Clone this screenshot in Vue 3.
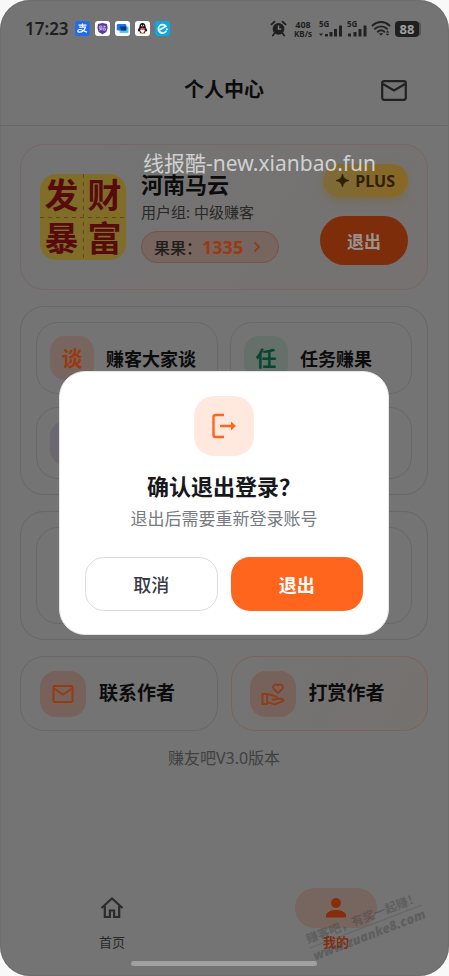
<script setup>
const services = [
  { label: '赚客大家谈', glyph: '谈', tone: 'orange' },
  { label: '任务赚果', glyph: '任', tone: 'green' },
  { label: '', glyph: '', tone: 'violet' },
  { label: '', glyph: '', tone: 'plain' },
]
const signals = [
  { id: 1, dot: true },
  { id: 2, dot: false },
]
</script>

<template>
  <div class="screen">
    <div class="status">
      <span class="time">17:23</span>
      <div class="apps">
        <svg viewBox="0 0 15 15"><rect width="15" height="15" rx="3" fill="#1f6cf0" /><path d="M3.5 4.2h8M7.5 2.4v3.7M4.2 6.2h6.2C9.500 9 7 11.200 4.500 11.200c-2.600 0-2.200-2.700.3-2.700 2.200 0 4.200 1.800 7.300 2.700" fill="none" stroke="#fff" stroke-width="1.200" /></svg>
        <svg viewBox="0 0 15 15"><rect width="15" height="15" rx="3" fill="#fff" /><path d="M3 3l4.500-1L12 3l.6 4-1.200 4-3.900 2.200L3.600 11 2.400 7z" fill="#5a3a9c" /><path d="M4.700 5h2.200v3.200H4.700zM5.800 6v2.200l-1.300 1.500M6 8.500l1 1M9 4.400v2.300M9 5.500h1.800M8.200 7.200h2.200v2H8.200z" fill="none" stroke="#d9c9f5" stroke-width=".8" /></svg>
        <svg viewBox="0 0 15 15"><rect width="15" height="15" rx="3" fill="#fff" /><path d="M4.500 5.500h9v5.500a1 1 0 0 1-1 1h-7a1 1 0 0 1-1-1z" fill="#55c5f5" /><rect x="1.800" y="3" width="9.500" height="6.500" rx="1.200" fill="#1d74e8" /><path d="M5 5.500h6.300V9.500H6z" fill="#0a3678" /></svg>
        <svg viewBox="0 0 15 15"><rect width="15" height="15" rx="3" fill="#fff" /><path d="M7.500 2c-2 0-3 1.500-3 3.300 0 1.200-1.600 2.800-1.600 4.700 0 .8.800.3 1.200-.3.300 1.500 1.500 2.800 3.400 2.800s3.100-1.300 3.400-2.800c.4.600 1.200 1.100 1.200.3 0-1.900-1.600-3.500-1.600-4.700C10.500 3.500 9.500 2 7.500 2z" fill="#151515" /><ellipse cx="7.500" cy="9.600" rx="2.200" ry="2.300" fill="#fff" /><path d="M4.600 6.800c1.800 1 4 1 5.800 0v1.300c-1.800.8-4 .8-5.800 0z" fill="#df2323" /><circle cx="6.600" cy="4.300" r=".6" fill="#fff" /><circle cx="8.400" cy="4.300" r=".6" fill="#fff" /><path d="M6 5.600h3l-1.500.8zM4.500 12h2.400v.8H4.500zM8.100 12h2.400v.8H8.100z" fill="#f0a020" /></svg>
        <svg viewBox="0 0 15 15"><rect width="15" height="15" rx="3" fill="#08a9e8" /><path d="M5.300 8.600l5.600-3.300A4.200 4.200 0 1 0 11 10.200" fill="none" stroke="#fff" stroke-width="1.700" stroke-linecap="round" /><circle cx="12" cy="8.200" r=".9" fill="#fff" /></svg>
      </div>
      <div class="indicators">
        <svg class="alarm" viewBox="0 0 17 17"><circle cx="8.500" cy="8.800" r="5.900" fill="#1f1f1f" /><path d="M1.500 4.300l3-2.700M15.500 4.300l-3-2.700M4.500 13.300L2.800 15.500M12.500 13.300l1.700 2.200" stroke="#1f1f1f" stroke-width="1.800" stroke-linecap="round" /><path d="M8.500 5.500v3.600h2.800" stroke="#858585" stroke-width="1.400" fill="none" /></svg>
        <span class="speed"><b>408</b><b>KB/s</b></span>
        <div v-for="s in signals" :key="s.id" class="signal">
          <span>5G</span>
          <svg v-if="s.dot" viewBox="0 0 24 12"><path d="M0 8.500h4L2 11z" fill="#222" /><path d="M7.500 11.500V9M12 11.500V7M16.500 11.500V4M21.500 11.500V.5" stroke="#222" stroke-width="3" /></svg>
          <svg v-else class="narrow" viewBox="0 0 20 12"><path d="M2.500 11.500V8.500M8 11.500V7M13 11.500V4M18 11.500V.5" stroke="#222" stroke-width="3" /></svg>
        </div>
        <svg class="wifi" viewBox="0 0 20 17"><path d="M1.500 5.500c5-4.600 12-4.600 17 0M4 8.800c3.500-3.300 8.500-3.300 12 0M6.700 11.700c2-1.800 4.600-1.800 6.600 0" fill="none" stroke="#222" stroke-width="1.900" stroke-linecap="round" /><path d="M7.700 13.300h4.600L10 15.800zM14.700 12.500l1.800-2 1.800 2zM14.700 13.800h3.600l-1.800 2z" fill="#222" /></svg>
        <span class="battery">88</span>
      </div>
    </div>

    <header class="topbar">
      <h1>个人中心</h1>
      <button class="mail" aria-label="消息">
        <svg viewBox="0 0 26 21"><rect x="1.200" y="1.200" width="23.600" height="18.600" rx="2" fill="none" stroke="#212121" stroke-width="2.200" /><path d="M2 4l11 6.500L24 4" fill="none" stroke="#212121" stroke-width="2.200" /></svg>
      </button>
    </header>

    <main>
      <section class="card profile">
        <div class="avatar"><span>发</span><span>财</span><span>暴</span><span>富</span></div>
        <div class="info">
          <h2>河南马云</h2>
          <p>用户组: 中级赚客</p>
          <a class="points" href="#">
            <span>果果：</span><strong>1335</strong>
            <svg viewBox="0 0 8 12"><path d="M1.500 1.500L6 6l-4.500 4.500" fill="none" stroke="#84401f" stroke-width="1.800" /></svg>
          </a>
        </div>
        <div class="side">
          <span class="plus">
            <svg viewBox="0 0 12 12"><path d="M6 0Q6.800 5.200 12 6 6.800 6.800 6 12 5.200 6.800 0 6 5.200 5.200 6 0z" stroke="#2f2003" stroke-width=".8" fill="#2f2003" /></svg>PLUS
          </span>
          <button class="quit">退出</button>
        </div>
      </section>

      <section class="card grid">
        <button v-for="(s, i) in services" :key="i" class="tile">
          <span class="badge" :class="s.tone">{{ s.glyph }}</span>
          <span>{{ s.label }}</span>
        </button>
      </section>

      <section class="card">
        <div class="tile tall"></div>
      </section>

      <section class="authors">
        <button class="author">
          <span class="mark">
            <svg viewBox="0 0 24 24"><rect x="2.500" y="4" width="19" height="16" rx="1" fill="none" stroke="#983a14" stroke-width="2" /><path d="M3 6.500l9 6 9-6" fill="none" stroke="#983a14" stroke-width="2" /></svg>
          </span>
          <span class="caption">联系作者</span>
        </button>
        <button class="author warm">
          <span class="mark">
            <svg viewBox="0 0 24 24"><g fill="none" stroke="#8c3d19" stroke-width="1.900" stroke-linejoin="round"><path d="M17 11l-4-3.900c-2.400-2.700 1.300-6.600 4-3.700 2.700-2.900 6.400 1 4 3.700z" /><path d="M1.500 12h4.700v10H1.500z" /><path d="M6.200 12.500h3.300l5.500 2.200c1.700.9 1.200 2.800-.6 2.800h-3.700M14.800 16.800h5.200c1.400 0 2.300.9 2.300 2.100L14 22.300l-7.800-2" /></g></svg>
          </span>
          <span class="caption">打赏作者</span>
        </button>
      </section>
      <p class="version">赚友吧V3.0版本</p>
    </main>

    <nav>
      <a href="#">
        <span class="pill"><svg viewBox="0 0 24 24"><path d="M1.500 12L12 2.500 22.500 12M4.800 10v11h5.100v-6.500h4.200V21h5.100V10" fill="none" stroke="#2b2b2b" stroke-width="2.200" /></svg></span>
        <span>首页</span>
      </a>
      <a href="#" class="active">
        <span class="pill"><svg viewBox="0 0 24 24"><circle cx="12" cy="7" r="5" fill="#852e0b" /><path d="M2 21.500v-2c0-3.500 5.500-5.500 10-5.500s10 2 10 5.500v2z" fill="#852e0b" /></svg></span>
        <span>我的</span>
      </a>
    </nav>
    <div class="home-bar"></div>

    <span class="site">线报酷-new.xianbao.fun</span>
    <div class="stamp"><span>赚客吧，有奖一起赚！</span><b>www.zuanke8.com</b></div>

    <div class="overlay">
      <div class="dialog" role="dialog" aria-labelledby="dialog-title">
        <div class="dialog-icon">
          <svg viewBox="0 0 28 28"><path d="M14 3H5.500Q3.500 3 3.500 5v18q0 2 2 2H14" fill="none" stroke="#ff651d" stroke-width="2.400" /><path d="M11 14h12" stroke="#ff651d" stroke-width="2.400" stroke-linecap="round" /><path d="M21 9.500L26 14l-5 4.500z" fill="#ff651d" /></svg>
        </div>
        <h2 id="dialog-title">确认退出登录？</h2>
        <p>退出后需要重新登录账号</p>
        <div class="actions">
          <button class="cancel">取消</button>
          <button class="confirm">退出</button>
        </div>
      </div>
    </div>
  </div>
</template>

<style>
body {
  margin: 0;
  background: #f8f8f8;
}
</style>

<style scoped>
* {
  box-sizing: border-box;
}
.screen {
  position: relative;
  display: flex;
  flex-direction: column;
  min-height: 100vh;
  padding-right: 1px;
  overflow: hidden;
  border-radius: 30px;
  background: #747474;
  box-shadow: inset 0 0 2px #5f5f50;
  color: #0c0c0d;
  font-family: "Noto Sans", "Noto Sans CJK SC", sans-serif;
}
h1, h2, p {
  margin: 0;
}
button {
  padding: 0;
  border: 0;
  background: none;
  color: inherit;
  font: inherit;
  cursor: pointer;
}
a {
  color: inherit;
  text-decoration: none;
}
svg {
  display: block;
  flex: none;
}
.status {
  display: flex;
  align-items: center;
  height: 57px;
  padding: 0 29px 0 25px;
  color: #1f1f1f;
}
.time {
  font-size: 17px;
  font-weight: 600;
  line-height: 20px;
}
.apps {
  display: flex;
  gap: 5px;
  margin-left: 6px;
}
.apps svg {
  width: 15px;
  height: 15px;
}
.indicators {
  display: flex;
  align-items: center;
  gap: 4px;
  margin-left: auto;
}
.alarm {
  width: 17px;
  height: 17px;
}
.speed {
  display: flex;
  flex-direction: column;
  align-items: center;
  margin: 0 3px;
  font-size: 9px;
  line-height: 9px;
}
.speed b:last-child {
  font-size: 8px;
}
.signal {
  position: relative;
  padding-top: 4px;
}
.signal span {
  position: absolute;
  top: -1px;
  left: 0;
  font-size: 8px;
  font-weight: 700;
  line-height: 8px;
}
.signal svg {
  width: 24px;
  height: 12px;
}
.signal svg.narrow {
  width: 20px;
}
.wifi {
  width: 20px;
  height: 17px;
}
.battery {
  width: 24px;
  border-radius: 4px;
  background: #1f1f1f;
  box-shadow: 3px 0 0 -1px #555;
  color: #a0a0a0;
  font-size: 13px;
  font-weight: 700;
  line-height: 16px;
  text-align: center;
}
.topbar {
  display: grid;
  grid-template-columns: 1fr auto 1fr;
  align-items: center;
  height: 69px;
  padding: 0 41px 2px;
  border-bottom: 1px solid #696969;
}
.topbar h1 {
  grid-column: 2;
  font-size: 20px;
  font-weight: 700;
  line-height: 28px;
}
.mail {
  justify-self: end;
}
.mail svg {
  width: 26px;
  height: 21px;
}
main {
  display: flex;
  flex-direction: column;
  gap: 16px;
  padding: 18px 20px 0;
}
.card {
  padding: 15px;
  border: 1px solid #676767;
  border-radius: 24px;
}
.profile {
  display: flex;
  align-items: center;
  gap: 15px;
  padding: 19px;
  border-color: #756763;
  background: linear-gradient(120deg, #747474, #757271);
}
.avatar {
  display: grid;
  grid-template-columns: 1fr 1fr;
  flex: none;
  width: 86px;
  height: 86px;
  border-radius: 16px;
  background:
    repeating-linear-gradient(90deg, #6a4319 0 4px, transparent 4px 8px) center / 100% 1px no-repeat,
    repeating-linear-gradient(#6a4319 0 4px, transparent 4px 8px) center / 1px 100% no-repeat,
    #806e28;
  color: #570b0d;
  font-size: 34px;
  font-weight: 700;
  line-height: 43px;
  text-align: center;
}
.info {
  display: flex;
  flex: 1;
  flex-direction: column;
  align-items: flex-start;
}
.info h2 {
  font-size: 22px;
  font-weight: 700;
  line-height: 26px;
}
.info p {
  margin: 5px 0 9px;
  color: #282828;
  font-size: 15px;
  line-height: 20px;
  white-space: nowrap;
}
.points {
  display: flex;
  align-items: center;
  height: 32px;
  padding: 0 17px 0 12px;
  border: 1px solid #765447;
  border-radius: 16px;
  background: #77655f;
  color: #211d1b;
  font-size: 16px;
  font-weight: 500;
}
.points strong {
  color: #983a14;
  font-size: 18px;
}
.points svg {
  width: 8px;
  height: 12px;
  margin-left: 10px;
}
.side {
  display: flex;
  flex-direction: column;
  align-items: flex-end;
  gap: 19px;
  padding-bottom: 5px;
}
.plus {
  display: flex;
  align-items: center;
  gap: 6px;
  height: 33px;
  padding: 0 13px;
  border-radius: 17px;
  background: linear-gradient(115deg, #7c6b3b, #8a6722);
  box-shadow: 0 4px 10px #776c50;
  color: #2f2003;
  font-size: 16px;
  font-weight: 700;
}
.plus svg {
  width: 13px;
  height: 13px;
}
.quit {
  width: 88px;
  height: 49px;
  border-radius: 25px;
  background: #7e2d0b;
  color: #989391;
  font-size: 17px;
  font-weight: 700;
}
.grid {
  display: grid;
  grid-template-columns: 1fr 1fr;
  gap: 13px 12px;
}
.tile {
  display: flex;
  align-items: center;
  gap: 12px;
  height: 72px;
  padding: 0 13px;
  border: 1px solid #686868;
  border-radius: 22px;
  font-size: 18px;
  font-weight: 700;
}
.tall {
  height: 97px;
}
.badge {
  display: grid;
  place-items: center;
  width: 44px;
  height: 44px;
  border-radius: 15px;
  font-size: 21px;
  line-height: 28px;
}
.orange {
  background: #77665f;
  color: #983a14;
}
.green {
  background: #66706b;
  color: #07472e;
}
.violet {
  background: #6c6870;
}
.authors {
  display: grid;
  grid-template-columns: 1fr 1fr;
  gap: 13px;
}
.author {
  display: flex;
  align-items: center;
  gap: 13px;
  height: 75px;
  padding: 0 19px;
  border: 1px solid #676767;
  border-radius: 24px;
  font-size: 19px;
  font-weight: 700;
}
.caption {
  padding-bottom: 3px;
}
.warm {
  padding: 0 18px;
  border-color: #79635a;
  background: linear-gradient(120deg, #747474, #75716f);
}
.mark {
  display: grid;
  place-items: center;
  width: 46px;
  height: 46px;
  border-radius: 16px;
  background: #77625b;
}
.mark svg {
  width: 24px;
  height: 24px;
}
.version {
  color: #404040;
  font-size: 16px;
  line-height: 22px;
  text-align: center;
}
nav {
  display: grid;
  grid-template-columns: 1fr 1fr;
  margin-top: auto;
  color: #292929;
  font-size: 13px;
}
nav a {
  display: flex;
  flex-direction: column;
  align-items: center;
  gap: 4px;
  line-height: 20px;
}
.pill {
  display: grid;
  place-items: center;
  width: 82px;
  height: 40px;
  border-radius: 20px;
}
.pill svg {
  width: 24px;
  height: 24px;
}
.active {
  color: #852e0b;
  font-weight: 700;
}
.active .pill {
  background: #77665f;
}
.home-bar {
  align-self: center;
  width: 186px;
  height: 5px;
  margin: 9px 0 10px;
  border-radius: 3px;
  background: #a0a0a0;
}
.site {
  position: absolute;
  top: 149px;
  left: 143px;
  color: #d0d0d0;
  font-size: 21px;
  line-height: 28px;
  white-space: nowrap;
}
.stamp {
  position: absolute;
  right: 23px;
  bottom: 32px;
  display: flex;
  flex-direction: column;
  align-items: center;
  transform: rotate(-21deg);
  color: rgba(60, 60, 60, 0.4);
  font-size: 12px;
  font-weight: 700;
  line-height: 17px;
  white-space: nowrap;
}
.stamp span {
  border-bottom: 1px solid rgba(60, 60, 60, 0.25);
}
.stamp b {
  font-size: 13px;
  font-style: italic;
}
.overlay {
  position: fixed;
  inset: 30px 1px 0 0;
  display: grid;
  place-items: center;
}
.dialog {
  display: flex;
  flex-direction: column;
  align-items: center;
  width: calc(100% - 118px);
  max-width: 420px;
  padding: 24px 25px 23px;
  border: 1px solid #e5e5e5;
  border-radius: 26px;
  background: #fff;
}
.dialog-icon {
  display: grid;
  place-items: center;
  width: 60px;
  height: 60px;
  border-radius: 20px;
  background: #ffe9df;
}
.dialog-icon svg {
  width: 28px;
  height: 28px;
}
.dialog h2 {
  margin-top: 15px;
  color: #17181b;
  font-size: 22px;
  font-weight: 700;
  line-height: 30px;
}
.dialog p {
  margin-top: 6px;
  color: #777a82;
  font-size: 17px;
  line-height: 24px;
}
.actions {
  display: grid;
  grid-template-columns: 1fr 1fr;
  gap: 13px;
  width: 100%;
  margin-top: 26px;
}
.actions button {
  height: 54px;
  border-radius: 19px;
  font-size: 18px;
}
.cancel {
  border: 1px solid #dcdde0;
  color: #383b43;
  font-weight: 500;
}
.confirm {
  background: #ff651d;
  color: #fff;
  font-weight: 700;
}
</style>
